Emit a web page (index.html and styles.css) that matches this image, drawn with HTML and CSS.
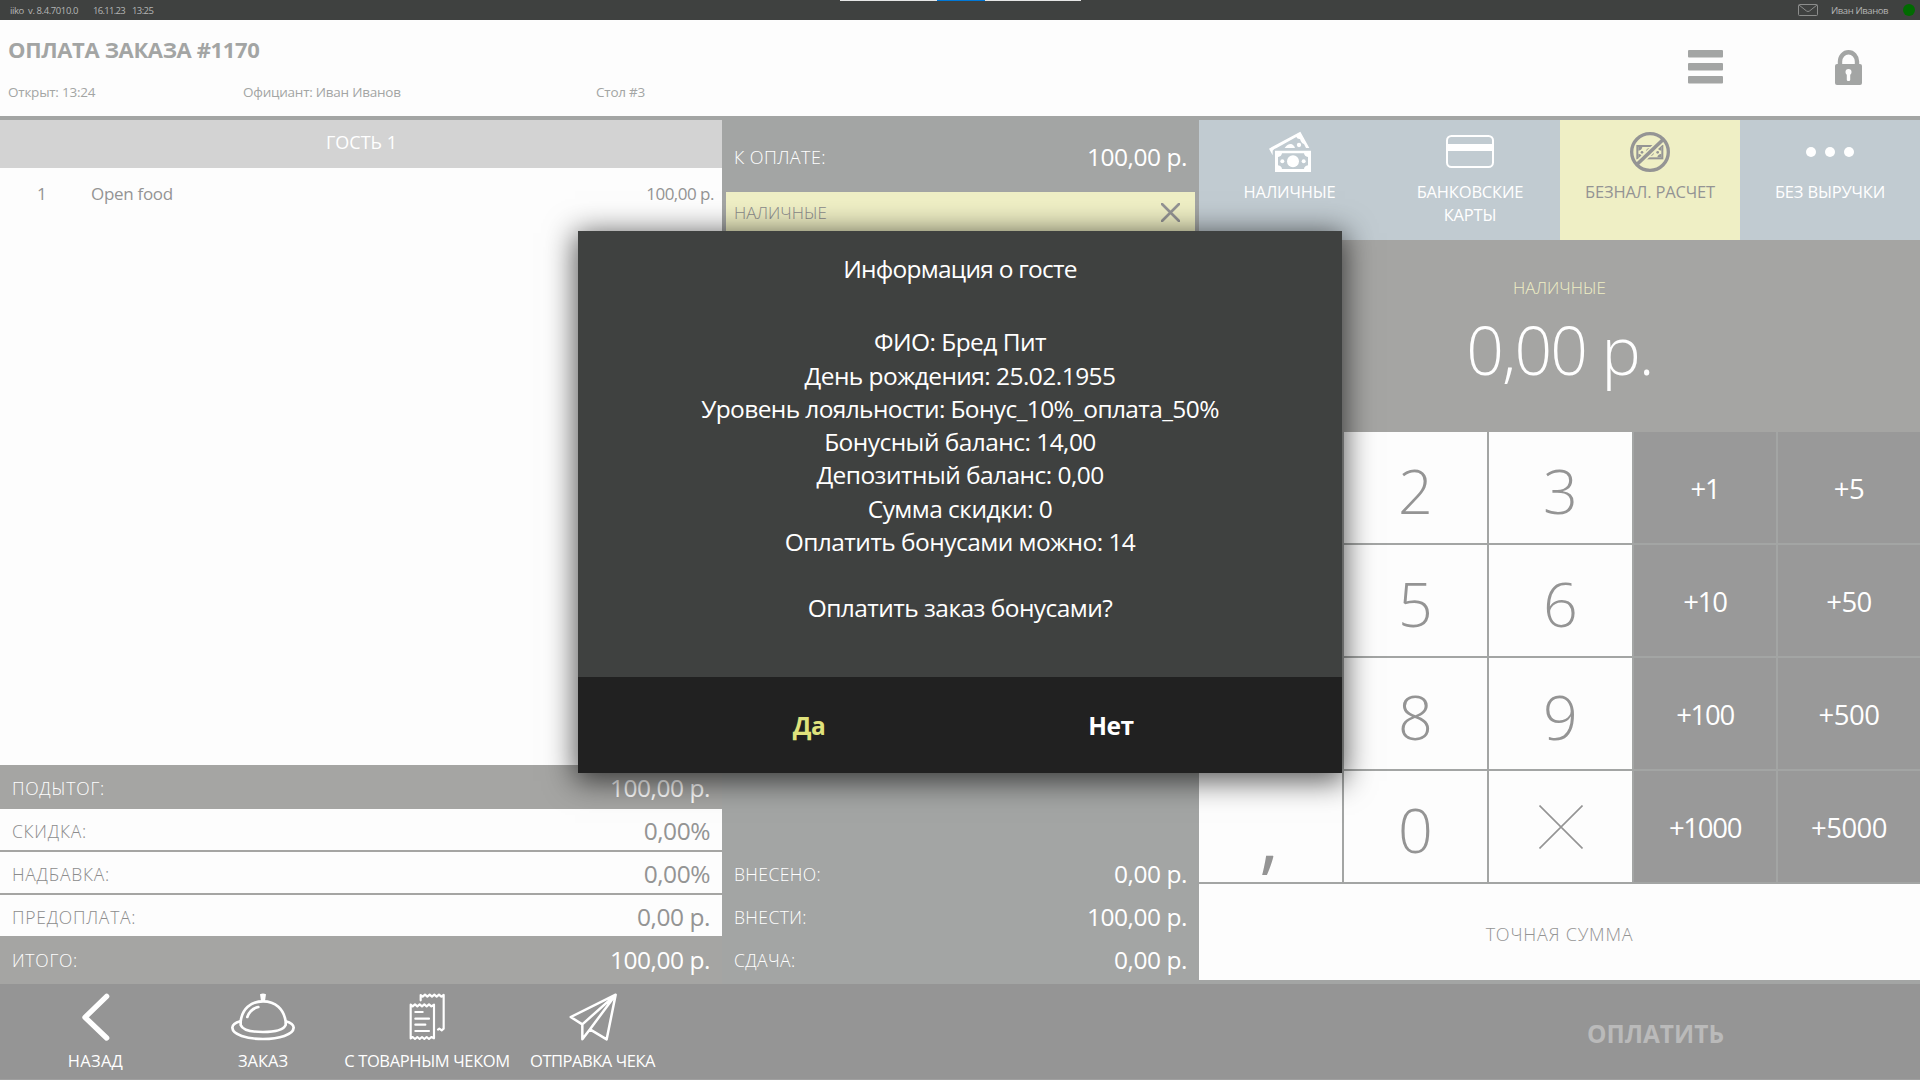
FILE: index.html
```html
<!DOCTYPE html>
<html lang="ru">
<head>
<meta charset="utf-8">
<title>Оплата заказа</title>
<link rel="stylesheet" href="styles.css">
</head>
<body>
<div class="app">
  <div class="statusbar">
    <span class="status-version">iiko&nbsp; v. 8.4.7010.0</span>
    <span class="status-date">16.11.23</span>
    <span class="status-time">13:25</span>
    <div class="status-right">
      <svg class="mail" width="20" height="12" viewBox="0 0 20 12" fill="none" stroke="#8c8d8c"><rect x=".5" y=".5" width="19" height="11" rx="1"/><path d="M1 1l7.5 6q1.5 1 3 0L19 1"/></svg>
      <span class="status-user">Иван Иванов</span>
      <span class="status-dot"></span>
    </div>
    <div class="drag-handle"><i></i></div>
  </div>

  <header class="header">
    <div class="header-info">
      <h1>ОПЛАТА ЗАКАЗА #1170</h1>
      <div class="order-meta">
        <span>Открыт: 13:24</span><span>Официант: Иван Иванов</span><span>Стол #3</span>
      </div>
    </div>
    <div class="header-actions">
      <div class="action"><svg width="35" height="34" viewBox="0 0 35 34" fill="#a3a5a4"><rect width="35" height="7.5" rx="1"/><rect y="13" width="35" height="7.5" rx="1"/><rect y="26" width="35" height="7.5" rx="1"/></svg></div>
      <div class="action"><svg width="27" height="35" viewBox="0 0 27 35"><path d="M5 16V11.5a8.5 9.3 0 0 1 17 0V16" fill="none" stroke="#a3a5a4" stroke-width="4.4"/><rect y="14" width="27" height="21" rx="2" fill="#a3a5a4"/><circle cx="13.5" cy="22" r="3" fill="#fdfdfd"/><rect x="11.8" y="22" width="3.4" height="9" rx="1.2" fill="#fdfdfd"/></svg></div>
    </div>
  </header>

  <main class="main">
    <section class="order">
      <div class="guest">ГОСТЬ 1</div>
      <div class="items">
        <div class="item"><span class="item-qty">1</span><span class="item-name">Open food</span><span class="item-price">100,00 р.</span></div>
      </div>
      <div class="totals">
        <div class="row row-dark"><span class="label">ПОДЫТОГ:</span><span class="value">100,00 р.</span></div>
        <div class="row row-light"><span class="label">СКИДКА:</span><span class="value">0,00%</span></div>
        <div class="row row-light"><span class="label">НАДБАВКА:</span><span class="value">0,00%</span></div>
        <div class="row row-light row-last"><span class="label">ПРЕДОПЛАТА:</span><span class="value">0,00 р.</span></div>
        <div class="row row-dark row-sum"><span class="label">ИТОГО:</span><span class="value">100,00 р.</span></div>
      </div>
    </section>

    <section class="payment">
      <div class="due"><span class="label">К ОПЛАТЕ:</span><span class="value">100,00 р.</span></div>
      <div class="method"><span>НАЛИЧНЫЕ</span>
        <svg width="19" height="19" viewBox="0 0 19 19" stroke="#949494" stroke-width="2.6" stroke-linecap="round"><path d="M1 1l17 17M18 1L1 18"/></svg>
      </div>
      <div class="summary">
        <div class="row"><span class="label">ВНЕСЕНО:</span><span class="value">0,00 р.</span></div>
        <div class="row"><span class="label">ВНЕСТИ:</span><span class="value">100,00 р.</span></div>
        <div class="row"><span class="label">СДАЧА:</span><span class="value">0,00 р.</span></div>
      </div>
    </section>

    <section class="entry">
      <div class="tabs">
        <div class="tab">
          <svg width="44" height="42" viewBox="24 15 132 126">
            <path fill="#fff" fill-rule="evenodd" d="M27 68L121 17L148 66H138L132 54Q124 52 120 39Q112 40 109 33L50 66Q42 68 38 74V88Z"/>
            <path fill="#fff" d="M74 66Q82 54 92 54Q101 55 105 66Z"/><circle cx="117" cy="57" r="6.5" fill="#fff"/>
            <path fill="#fff" fill-rule="evenodd" d="M45 74H153V138H45ZM66 82Q65 91 54 93V118Q65 120 66 129H132Q133 120 144 118V93Q133 91 132 82Z"/>
            <circle cx="99" cy="106" r="18" fill="#fff"/><circle cx="67" cy="106" r="6" fill="#fff"/><circle cx="131" cy="106" r="6" fill="#fff"/>
          </svg>
          <span>НАЛИЧНЫЕ</span>
        </div>
        <div class="tab">
          <svg width="48" height="42" viewBox="0 0 48 42"><rect x="1" y="5" width="46" height="31" rx="4.5" fill="none" stroke="#fff" stroke-width="2"/><rect x="1" y="13" width="46" height="7" fill="#fff"/></svg>
          <span>БАНКОВСКИЕ<br>КАРТЫ</span>
        </div>
        <div class="tab tab-active">
          <svg width="42" height="42" viewBox="1107 15 126 126" fill="none" stroke="#949494">
            <rect x="1132" y="60" width="75" height="37" stroke-width="6"/>
            <path fill="#949494" stroke="none" d="M1135 63h12q-1 9-12 11zM1204 63h-12q1 9 12 11zM1135 94h12q-1-9-12-11zM1204 94h-12q1-9 12-11z"/>
            <circle cx="1170" cy="78" r="12" fill="#949494" stroke="none"/><circle cx="1146" cy="79" r="4" fill="#949494" stroke="none"/><circle cx="1193" cy="79" r="4" fill="#949494" stroke="none"/>
            <path stroke="#efefc5" stroke-width="20" d="M1132 114L1208 42"/>
            <path stroke-width="11" d="M1129 117L1211 39"/>
            <circle cx="1170" cy="78" r="55" stroke-width="10"/>
          </svg>
          <span>БЕЗНАЛ. РАСЧЕТ</span>
        </div>
        <div class="tab">
          <svg width="48" height="42" viewBox="0 0 48 42" fill="#fff"><circle cx="5" cy="21" r="5"/><circle cx="24" cy="21" r="5"/><circle cx="43" cy="21" r="5"/></svg>
          <span>БЕЗ ВЫРУЧКИ</span>
        </div>
      </div>
      <div class="amount">
        <div class="amount-label">НАЛИЧНЫЕ</div>
        <div class="amount-value">0,00 р.</div>
      </div>
      <div class="keypad">
        <div class="key">1</div><div class="key">2</div><div class="key">3</div><div class="key add tight">+1</div><div class="key add">+5</div>
        <div class="key">4</div><div class="key">5</div><div class="key">6</div><div class="key add tight">+10</div><div class="key add">+50</div>
        <div class="key">7</div><div class="key">8</div><div class="key">9</div><div class="key add tight">+100</div><div class="key add">+500</div>
        <div class="key comma">,</div><div class="key">0</div>
        <div class="key clear"><svg width="44" height="44" viewBox="0 0 44 44" stroke="#949494" stroke-width="1.6"><path d="M.5 .5l43 43M43.5 .5l-43 43"/></svg></div>
        <div class="key add tight">+1000</div><div class="key add">+5000</div>
      </div>
      <div class="exact">ТОЧНАЯ СУММА</div>
    </section>
  </main>

  <footer class="footer">
    <div class="nav nav-back">
      <svg width="28" height="48" viewBox="0 0 84 144" fill="none" stroke="#fff" stroke-width="16" stroke-linecap="round" stroke-linejoin="round"><path d="M74 10L9 73L74 135"/></svg>
      <span>НАЗАД</span>
    </div>
    <div class="nav nav-order">
      <svg width="64" height="48" viewBox="693 40 192 144" fill="none" stroke="#fff" stroke-width="8">
        <path d="M722 136V126C726 88 752 65 789 65S852 88 857 126V136Q848 157 789 157T722 136Z"/>
        <path d="M721 125Q698 131 697 144C698 165 740 178 789 178S880 165 881 144Q880 131 857 125"/>
        <path d="M742 112Q750 88 775 82" stroke-linecap="round"/>
        <path fill="#fff" stroke="none" d="M780 44Q789 39 798 44L795 64H783Z"/>
      </svg>
      <span>ЗАКАЗ</span>
    </div>
    <div class="nav nav-receipt">
      <svg width="36" height="48" viewBox="208 40 108 144" fill="none" stroke="#fff" stroke-width="6.5" stroke-linecap="round" stroke-linejoin="round">
        <path d="M213 75l6 5 7-6 7 6 7-6 7 6 7-6 7 6 7-6 7 6 8-5V176l-8-4-7 6-7-6-7 6-7-6-7 6-7-6-7 6-7-6-6 4Z"/>
        <path d="M243 62V46l6 5 7-6 7 6 7-6 7 6 7-6 7 6 7-6 7 6 7-5V147l-6 5-7-5-4 3"/>
        <path d="M227 97h22M227 117h41M227 135h30M227 154h41"/>
      </svg>
      <span>С ТОВАРНЫМ ЧЕКОМ</span>
    </div>
    <div class="nav nav-send">
      <svg width="48" height="48" viewBox="686 40 144 144" fill="none" stroke="#fff" stroke-width="7.5" stroke-linejoin="round"><path d="M826 45L691 112L726 134V179L749 149L799 179ZM826 45L726 134M826 45L749 149"/></svg>
      <span>ОТПРАВКА ЧЕКА</span>
    </div>
    <div class="pay">ОПЛАТИТЬ</div>
  </footer>

  <div class="modal">
    <div class="modal-body">
      <div class="modal-title">Информация о госте</div>
      <p>ФИО: Бред Пит</p>
      <p>День рождения: 25.02.1955</p>
      <p class="level">Уровень лояльности: Бонус_10%_оплата_50%</p>
      <p>Бонусный баланс: 14,00</p>
      <p>Депозитный баланс: 0,00</p>
      <p>Сумма скидки: 0</p>
      <p>Оплатить бонусами можно: 14</p>
      <p class="question">Оплатить заказ бонусами?</p>
    </div>
    <div class="modal-actions"><button class="yes">Да</button><button>Нет</button></div>
  </div>
</div>
</body>
</html>
```
FILE: styles.css
```css
* { box-sizing: border-box; }

body {
  margin: 0;
  background: #a3a5a4;
  font-family: "Open Sans", "Noto Sans", sans-serif;
  color: #949494;
}

svg { display: block; flex: none; }

.app {
  position: relative;
  display: flex;
  flex-direction: column;
  width: 1920px;
  height: 1080px;
  overflow: hidden;
  white-space: nowrap;
}

/* Status bar */
.statusbar {
  position: relative;
  display: flex;
  align-items: center;
  height: 20px;
  padding-left: 10px;
  background: #3f4140;
  color: #b4b5b4;
  font-size: 9.5px;
  letter-spacing: -0.4px;
}
.status-version { width: 83px; }
.status-date { width: 39px; letter-spacing: -0.7px; }
.status-time { letter-spacing: -0.6px; }
.status-right { display: flex; align-items: center; margin-left: auto; padding-right: 5px; }
.mail { margin-right: 1px; }
.status-user { width: 72px; margin-left: 12px; }
.status-dot { width: 12px; height: 12px; border-radius: 50%; background: #006b00; }
.drag-handle {
  position: absolute;
  top: 0;
  left: 840px;
  display: flex;
  justify-content: center;
  width: 241px;
  height: 1px;
  background: #e6e6e6;
}
.drag-handle i { width: 48px; background: #0078d7; }

/* Header */
.header {
  display: flex;
  justify-content: space-between;
  height: 100px;
  background: #fdfdfd;
  border-bottom: 4px solid #a3a5a4;
  color: #a3a5a4;
}
.header-info { padding: 14px 0 0 8px; }
h1 { margin: 0; font-size: 22px; line-height: 30px; font-weight: 700; letter-spacing: -0.35px; }
.order-meta {
  display: grid;
  grid-template-columns: 235px 353px auto;
  padding-top: 18px;
  font-size: 13.5px;
  line-height: 20px;
  letter-spacing: -0.24px;
}
.header-actions { display: flex; }
.action { display: flex; align-items: center; justify-content: center; width: 143px; height: 94px; }

/* Columns */
.main { display: grid; grid-template-columns: 722px 477px 721px; height: 864px; }

.order { display: flex; flex-direction: column; background: #fdfdfd; }
.guest {
  height: 48px;
  padding-left: 1px;
  background: #d3d3d3;
  color: #fff;
  font-size: 18px;
  line-height: 44px;
  text-align: center;
}
.items { flex: 1; }
.item { display: flex; padding: 13px 8px 0 37px; font-size: 17px; line-height: 25px; letter-spacing: -0.3px; }
.item-qty { width: 54px; }
.item-price { margin-left: auto; letter-spacing: -0.5px; }

.row { display: flex; justify-content: space-between; height: 43px; padding: 0 12px; }
.label {
  padding-top: 1px;
  font-size: 17.5px;
  font-weight: 300;
  line-height: 43px;
  letter-spacing: 0.75px;
}
.value { padding-top: 1px; font-size: 24.5px; line-height: 41px; letter-spacing: -0.45px; }
.row-dark { height: 44px; padding-top: 1px; background: #a5a5a3; color: #fff; }
.row-light { background: #fdfdfd; border-bottom: 2px solid #a5a5a3; }
.row-light .label { color: #8c8c8c; }
.row-last { height: 41px; border-bottom: 0; }
.row-sum { height: 48px; padding-top: 2px; }

.payment { display: flex; flex-direction: column; background: #a3a5a4; color: #fff; }
.payment .label { letter-spacing: 0.4px; }
.due { display: flex; justify-content: space-between; height: 72px; padding: 15px 12px 0; }
.due .label { font-size: 18px; }
.due .value { padding-top: 1px; }
.method {
  display: flex;
  align-items: flex-start;
  justify-content: space-between;
  height: 42px;
  margin: 0 4px;
  padding: 0 15px 0 8px;
  background: #efefc5;
  color: #8c8c8c;
  font-size: 17px;
  font-weight: 300;
  line-height: 41px;
}
.method svg { margin-top: 11px; }
.summary { margin-top: auto; padding-bottom: 3px; }

/* Payment types */
.entry { display: flex; flex-direction: column; }
.tabs { display: grid; grid-template-columns: 181px 180px 180px 180px; height: 120px; background: #c1cbd1; }
.tab {
  display: flex;
  flex-direction: column;
  align-items: center;
  padding-top: 11px;
  color: #fff;
  font-size: 16.5px;
  line-height: 23px;
  text-align: center;
}
.tab span { padding-top: 7px; letter-spacing: -0.17px; }
.tab-active { background: #efefc5; color: #949494; }

.amount { height: 192px; padding-top: 36px; background: #a5a5a3; text-align: center; }
.amount-label { color: #efefc5; font-size: 17px; font-weight: 300; line-height: 24px; }
.amount-value { color: #fff; font-size: 66px; font-weight: 300; line-height: 98px; letter-spacing: -1.85px; }

.keypad {
  display: grid;
  grid-template-columns: 143px 143px 143px 142px 142px;
  grid-auto-rows: 111px;
  gap: 2px;
  padding-bottom: 2px;
  background: #a3a5a4;
}
.key {
  padding-top: 5px;
  background: #fdfdfd;
  font-size: 61px;
  font-weight: 300;
  line-height: 108px;
  text-align: center;
}
.add {
  padding-top: 1px;
  background: #999;
  color: #fff;
  font-size: 27.5px;
  font-weight: 400;
  line-height: 111px;
  letter-spacing: -0.5px;
}
.tight { letter-spacing: -1.3px; }
.comma { padding-right: 3px; font-size: 78px; font-weight: 400; line-height: 118px; }
.clear { display: flex; justify-content: center; padding-top: 34px; }
.exact {
  height: 96px;
  background: #fdfdfd;
  font-size: 18px;
  font-weight: 300;
  line-height: 100px;
  letter-spacing: 0.8px;
  text-align: center;
}

/* Bottom bar */
.footer { display: flex; height: 96px; background: #959595; border-bottom: 1px solid #a0a0a0; color: #fff; }
.nav {
  display: flex;
  flex-direction: column;
  align-items: center;
  padding-top: 9px;
  font-size: 16.5px;
  line-height: 23px;
}
.nav span { padding-top: 8px; }
.nav-back { width: 191px; letter-spacing: 0.3px; }
.nav-order { width: 144px; }
.nav-receipt { width: 184px; letter-spacing: -0.35px; }
.nav-send { width: 147px; letter-spacing: -0.45px; }
.pay {
  width: 529px;
  margin-left: auto;
  color: #bababa;
  font-size: 24.5px;
  font-weight: 700;
  line-height: 99px;
  text-align: center;
}

/* Guest dialog */
.modal {
  position: absolute;
  top: 231px;
  left: 578px;
  width: 764px;
  height: 542px;
  box-shadow: 0 5px 28px 3px rgba(0, 0, 0, 0.65);
  color: #fff;
  font-size: 24.5px;
  text-align: center;
}
.modal-body { height: 446px; padding-top: 21px; background: #3f4140; }
.modal-title { padding-bottom: 40.4px; line-height: 33px; letter-spacing: -0.75px; }
.modal p { margin: 0; line-height: 33.25px; letter-spacing: -0.55px; }
.modal .level { letter-spacing: -0.62px; }
.modal .question { padding-top: 33px; }
.modal-actions { display: flex; justify-content: center; height: 96px; background: #212121; }
.modal-actions button {
  width: 302px;
  padding: 1px 0 0;
  border: 0;
  background: none;
  color: #fff;
  font: 700 24.5px/96px "Open Sans", "Noto Sans", sans-serif;
  letter-spacing: -0.5px;
}
.modal-actions .yes { color: #dfe27c; }
```
